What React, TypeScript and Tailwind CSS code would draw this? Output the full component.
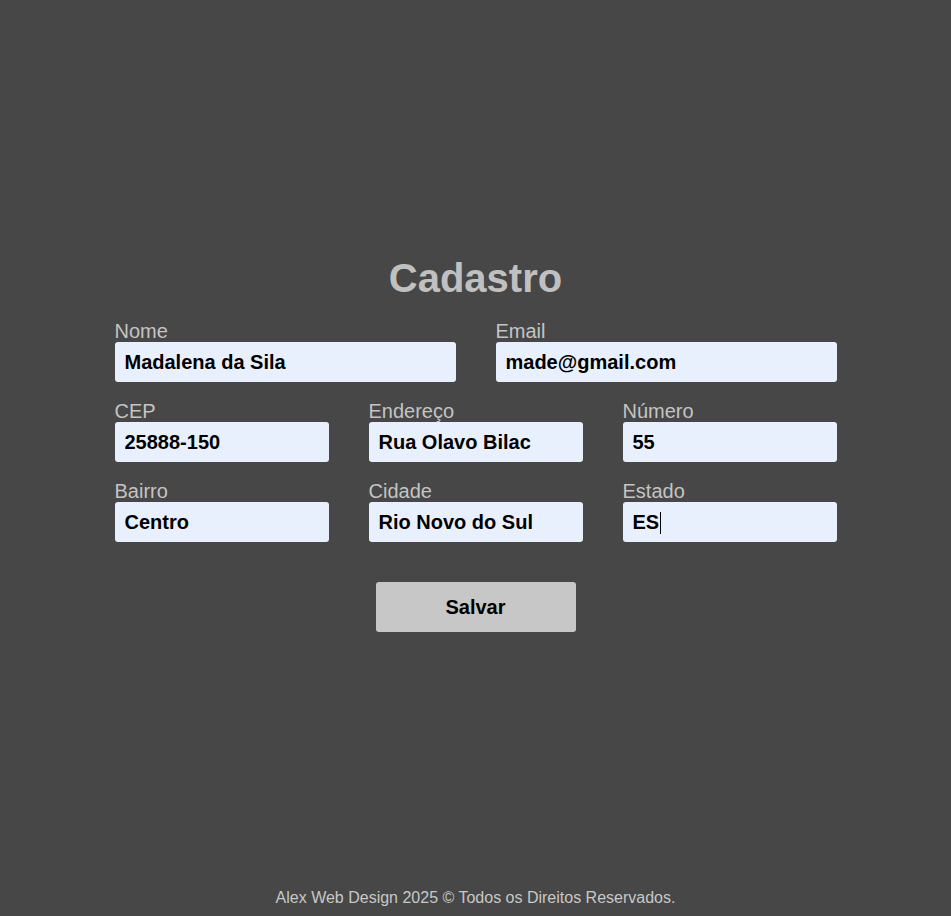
import { useState } from 'react';

const font = { fontFamily: '"Liberation Sans", Arial, sans-serif' };

interface FieldProps {
    label: string;
    value: string;
    onChange: (v: string) => void;
    caret?: boolean;
}

function Field({ label, value, onChange, caret }: FieldProps) {
    return (
        <label className="flex flex-col">
            <span className="text-[20px] leading-[22px] text-[#c4c4c4]">{label}</span>
            <span className="relative">
                <input value={value} onChange={(e) => onChange(e.target.value)}
                    className="w-full h-10 px-[10px] rounded-[3px] bg-[#e8f0fe] text-black text-[20px] font-bold outline-none" />
                {caret && (
                    <span className="absolute left-[37px] top-[10px] w-px h-[22px] bg-black" />
                )}
            </span>
        </label>
    );
}

export default function App() {
    const [nome, setNome] = useState('Madalena da Sila');
    const [email, setEmail] = useState('made@gmail.com');
    const [cep, setCep] = useState('25888-150');
    const [endereco, setEndereco] = useState('Rua Olavo Bilac');
    const [numero, setNumero] = useState('55');
    const [bairro, setBairro] = useState('Centro');
    const [cidade, setCidade] = useState('Rio Novo do Sul');
    const [estado, setEstado] = useState('ES');

    return (
        <div className="min-h-screen flex flex-col bg-[#464746]" style={font}>
            <main className="flex-1 flex flex-col items-center justify-center pt-[11px]">
                <div className="w-[722px] flex flex-col">
                    <h1 className="text-center text-[40px] leading-[46px] font-bold text-[#c0c0c0] mb-[19px]">Cadastro</h1>

                    <div className="grid grid-cols-2 gap-x-10 mb-[18px]">
                        <Field label="Nome" value={nome} onChange={setNome} />
                        <Field label="Email" value={email} onChange={setEmail} />
                    </div>

                    <div className="grid grid-cols-3 gap-x-10 gap-y-[18px]">
                        <Field label="CEP" value={cep} onChange={setCep} />
                        <Field label="Endereço" value={endereco} onChange={setEndereco} />
                        <Field label="Número" value={numero} onChange={setNumero} />
                        <Field label="Bairro" value={bairro} onChange={setBairro} />
                        <Field label="Cidade" value={cidade} onChange={setCidade} />
                        <Field label="Estado" value={estado} onChange={setEstado} caret />
                    </div>

                    <button className="self-center mt-10 w-[200px] h-[50px] rounded-[3px] bg-[#c6c7c6] text-black text-[20px] font-bold">
                        Salvar
                    </button>
                </div>
            </main>

            <footer className="pt-[10px] pb-[6px] text-center text-[16px] text-[#c8c8c8]">
                Alex Web Design 2025 © Todos os Direitos Reservados.
            </footer>
        </div>
    );
}
